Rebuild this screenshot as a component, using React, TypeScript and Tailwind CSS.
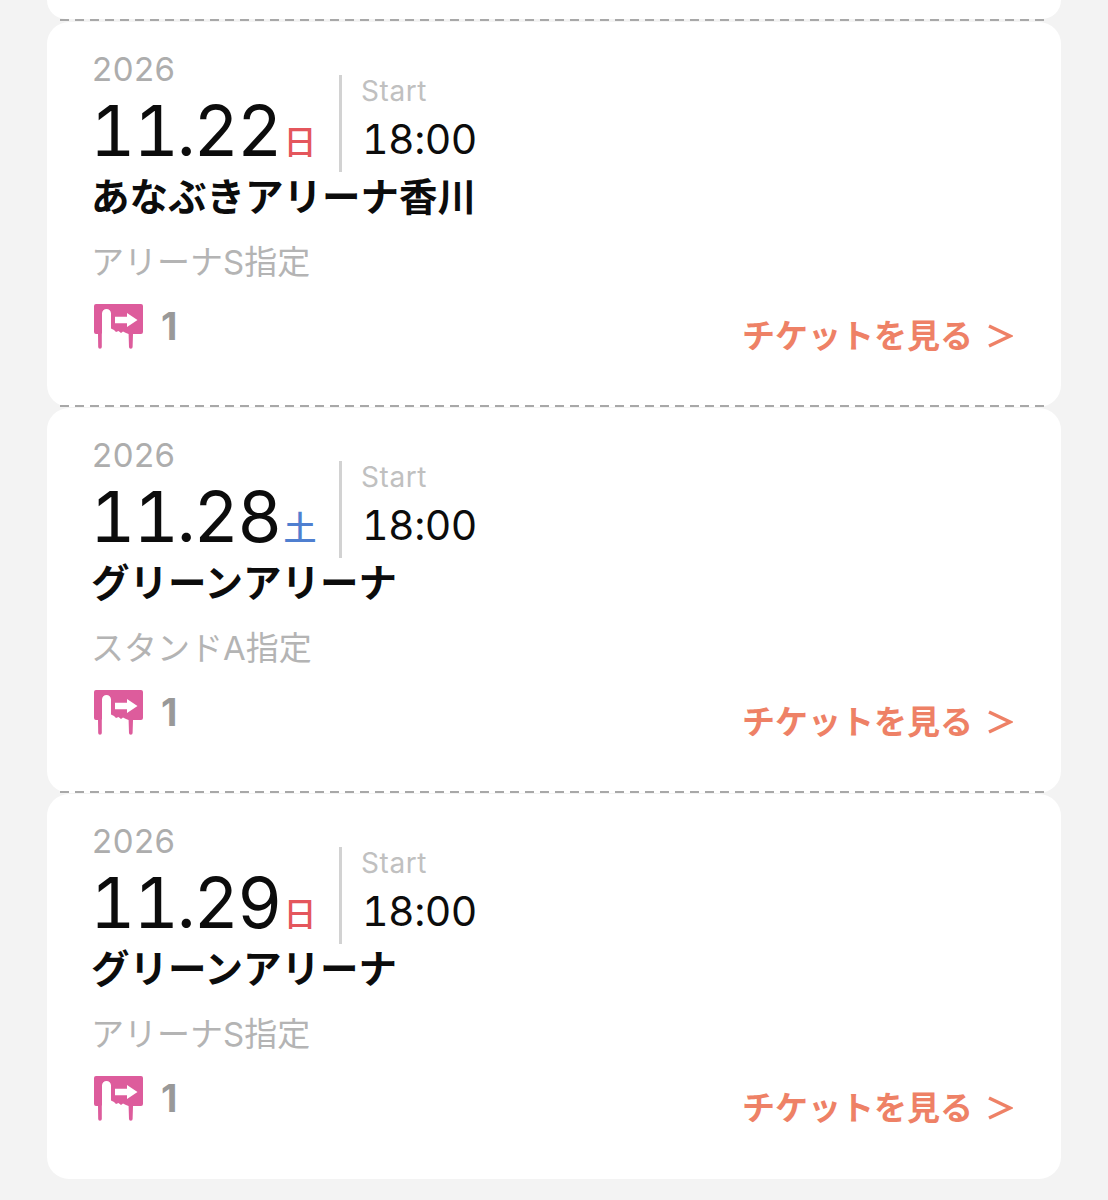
const tickets = [
  { date: "11.22", day: "日", dayColor: "text-[#e4565c]", venue: "あなぶきアリーナ香川", seat: "アリーナS指定" },
  { date: "11.28", day: "土", dayColor: "text-[#4f7fd0]", venue: "グリーンアリーナ", seat: "スタンドA指定" },
  { date: "11.29", day: "日", dayColor: "text-[#e4565c]", venue: "グリーンアリーナ", seat: "アリーナS指定" },
];

function TransferIcon() {
  return (
    <svg width="50" height="46" viewBox="0 0 50 46" className="ml-[1px] mt-[1px] block">
      {/* sign board with drips, finger is the cut out part */}
      <path
        fill="#dd5c9c"
        d="M2 0H47a2 2 0 0 1 2 2V28a2 2 0 0 1-2 2H39L38.600 43a1.800 1.800 0 0 1-3.600 0L34.600 30 32 29 29 27.500 27 29 24.500 27 22 28 20 26 17 24.500V9.500a4.500 4.500 0 0 0-9 0V29L7.800 30V43a1.800 1.800 0 0 1-3.600 0L4 30H2a2 2 0 0 1-2-2V2a2 2 0 0 1 2-2z"
      />
      <path fill="#fff" d="M21 12.700H33V9L43.500 16 33 23V19.300H21z" />
    </svg>
  );
}

function TicketCard({ t }: { t: (typeof tickets)[number] }) {
  return (
    <div className="-mb-[2px] h-[385px] rounded-[22px] bg-white px-[46px] pt-[28px]">
      <div className="flex h-[125px] items-start">
        <div className="w-[246px]">
          <div className="-ml-[1px] text-[33px] leading-[38px] tracking-[0.5px] text-[#adadad]">2026</div>
          <div className="flex items-end">
            <span className="-ml-[3px] pt-[3px] text-[70px] leading-[80px] tracking-[-2px] text-[#0c0c0c] tabular-nums">
              {t.date}
            </span>
            <span className={`mb-[10px] ml-[3px] text-[33px] font-medium leading-[38px] ${t.dayColor}`}>{t.day}</span>
          </div>
        </div>
        <div className="mt-[25px] h-[97px] w-[3px] bg-[#d2d2d2]" />
        <div className="pl-[19px] pt-[25px]">
          <div className="text-[28px] leading-[32px] tracking-[0.6px] text-[#c0c0c0]">Start</div>
          <div className="mt-[7px] pl-[1px] text-[41px] leading-[50px] tracking-[-0.5px] text-[#0c0c0c] tabular-nums">18:00</div>
        </div>
      </div>
      <div className="-ml-[2px] -mt-[2px] text-[38.5px] font-semibold leading-[48px] text-[#0c0c0c]">{t.venue}</div>
      <div className="-ml-[2px] mt-[19px] text-[33px] leading-[44px] text-[#b4b4b4]">{t.seat}</div>
      <div className="mt-[19px] flex items-start justify-between">
        <div className="flex items-start gap-[17px]">
          <TransferIcon />
          <span className="text-[38px] font-bold leading-[46px] text-[#999999]">1</span>
        </div>
        <div className="mr-[2px] mt-[11px] flex items-center gap-[15px] text-[33px] font-semibold leading-[44px] text-[#ee8166]">
          <span>チケットを見る</span>
          <svg width="25" height="26" viewBox="0 0 25 26" fill="none" stroke="#ee8166" strokeWidth="3.500">
            <path d="M1 3l21 10L1 23" />
          </svg>
        </div>
      </div>
    </div>
  );
}

function Dashes() {
  return (
    <div className="relative mx-[13px] h-[2px] bg-[repeating-linear-gradient(90deg,#a8a8a8_0,#a8a8a8_9px,transparent_9px,transparent_15px)]" />
  );
}

export default function App() {
  return (
    <div className="h-[1200px] overflow-hidden bg-[#f3f3f3] px-[47px] font-['Inter','Noto_Sans_CJK_JP',sans-serif]">
      <div className="h-[19px] rounded-b-[22px] bg-white" />
      {tickets.map((t) => (
        <div key={t.date}>
          <Dashes />
          <div className="h-[1px]" />
          <TicketCard t={t} />
        </div>
      ))}
    </div>
  );
}
